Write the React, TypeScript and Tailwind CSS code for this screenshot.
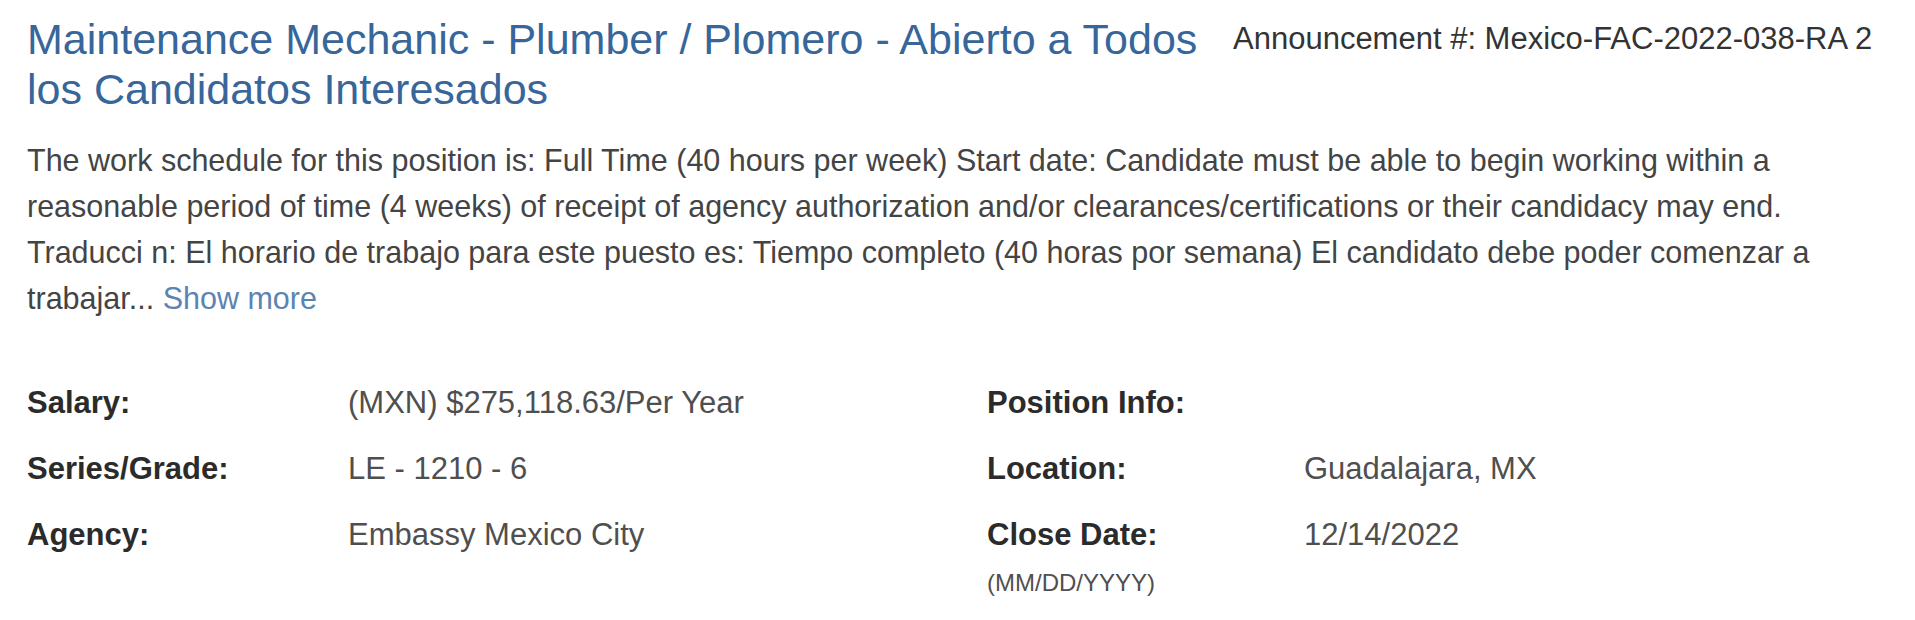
import React from "react";

const Label = ({ children }: { children: React.ReactNode }) => (
  <div className="font-bold text-[#2b2b2b] text-[31px] leading-[36px]">{children}</div>
);

const Value = ({ children }: { children?: React.ReactNode }) => (
  <div className="text-[#4f4f4f] text-[31px] leading-[36px]">{children}</div>
);

const App = () => {
  return (
    <div className="w-[1915px] h-[620px] bg-white px-[27px] pt-[14px] overflow-hidden font-['Liberation_Sans',Arial,sans-serif]">
      <div className="flex items-start">
        <h2 className="w-[1200px] text-[43px] leading-[50px] text-[#37669b] font-normal">
          Maintenance Mechanic - Plumber / Plomero - Abierto a Todos los Candidatos Interesados
        </h2>
        <div className="ml-[6px] text-[31px] leading-[50px] text-[#333] whitespace-nowrap">
          Announcement #: Mexico-FAC-2022-038-RA 2
        </div>
      </div>

      <p className="mt-[23px] text-[30.5px] leading-[46px] text-[#444] whitespace-nowrap">
        The work schedule for this position is: Full Time (40 hours per week) Start date: Candidate must be able
        to begin working within a
        <br />
        reasonable period of time (4 weeks) of receipt of agency authorization and/or clearances/certifications or
        their candidacy may end.
        <br />
        Traducci n: El horario de trabajo para este puesto es: Tiempo completo (40 horas por semana) El candidato
        debe poder comenzar a
        <br />
        trabajar... <a className="text-[#5a84b3]">Show more</a>
      </p>

      <div className="mt-[64px] grid grid-cols-[321px_639px_317px_1fr] gap-y-[30px]">
        <Label>Salary:</Label>
        <Value>(MXN) $275,118.63/Per Year</Value>
        <Label>Position Info:</Label>
        <Value />

        <Label>Series/Grade:</Label>
        <Value>LE - 1210 - 6</Value>
        <Label>Location:</Label>
        <Value>Guadalajara, MX</Value>

        <Label>Agency:</Label>
        <Value>Embassy Mexico City</Value>
        <div>
          <Label>Close Date:</Label>
          <div className="mt-[15px] text-[24px] leading-[30px] text-[#505050]">(MM/DD/YYYY)</div>
        </div>
        <Value>12/14/2022</Value>
      </div>
    </div>
  );
};

export default App;
